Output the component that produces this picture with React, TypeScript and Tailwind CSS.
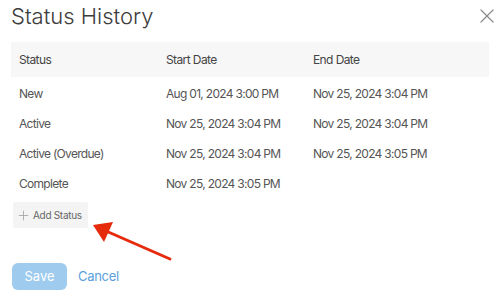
import React from 'react';
import { X, Plus } from 'lucide-react';

const rows = [
  { status: 'New', start: 'Aug 01, 2024 3:00 PM', end: 'Nov 25, 2024 3:04 PM' },
  { status: 'Active', start: 'Nov 25, 2024 3:04 PM', end: 'Nov 25, 2024 3:04 PM' },
  { status: 'Active (Overdue)', start: 'Nov 25, 2024 3:04 PM', end: 'Nov 25, 2024 3:05 PM' },
  { status: 'Complete', start: 'Nov 25, 2024 3:05 PM', end: '' },
];

const App: React.FC = () => {
  return (
    <div className="relative w-[500px] h-[304px] bg-white text-[#555] font-['Inter',sans-serif]">
      {/* Header */}
      <div className="flex items-start justify-between pl-[11px] pr-[1px] pt-[1px]">
        <h2 className="text-[22px] leading-[30px] text-[#3d3d3d] font-light tracking-[0px]">Status History</h2>
        <button className="mt-[3px] text-[#8a8a8a]">
          <X className="w-[24px] h-[24px]" strokeWidth={1.2} />
        </button>
      </div>

      {/* Table */}
      <div className="mx-[11px] mt-[11px] w-[478px]">
        <div className="grid grid-cols-[147px_147px_1fr] bg-[#f7f7f7] h-[35px] items-center pl-[8px] text-[12px] text-[#444] tracking-[-0.6px]">
          <span>Status</span>
          <span>Start Date</span>
          <span>End Date</span>
        </div>
        <div className="pt-[2px]">
          {rows.map((r) => (
            <div
              key={r.status}
              className="grid grid-cols-[147px_147px_1fr] h-[30px] items-center pl-[8px] text-[12px] text-[#555] tracking-[-0.7px]"
            >
              <span>{r.status}</span>
              <span>{r.start}</span>
              <span>{r.end}</span>
            </div>
          ))}
        </div>
      </div>

      {/* Add status */}
      <div className="pl-[13px] mt-[3px]">
        <button className="flex items-center gap-[2px] h-[26px] w-[75px] pl-[3px] bg-[#f4f4f4] rounded-[2px] text-[10px] text-[#666] tracking-[-0.3px]">
          <Plus className="w-[15px] h-[15px] text-[#999]" strokeWidth={1.2} />
          <span>Add Status</span>
        </button>
      </div>

      {/* Footer */}
      <div className="flex items-center gap-[11px] pl-[12px] mt-[35px]">
        <button className="h-[27px] w-[55px] rounded-[6px] bg-[#9ecbee] text-white text-[13px]">Save</button>
        <button className="text-[13px] text-[#5aa0dc] tracking-[-0.3px]">Cancel</button>
      </div>

      {/* Annotation arrow */}
      <svg className="absolute left-0 top-0 pointer-events-none" width="500" height="304">
        <line x1="170" y1="259" x2="106" y2="231" stroke="#e62a0c" strokeWidth="3" strokeLinecap="round" />
        <polygon points="93,225 113,222 104,242" fill="#e62a0c" />
      </svg>
    </div>
  );
};

export default App;
